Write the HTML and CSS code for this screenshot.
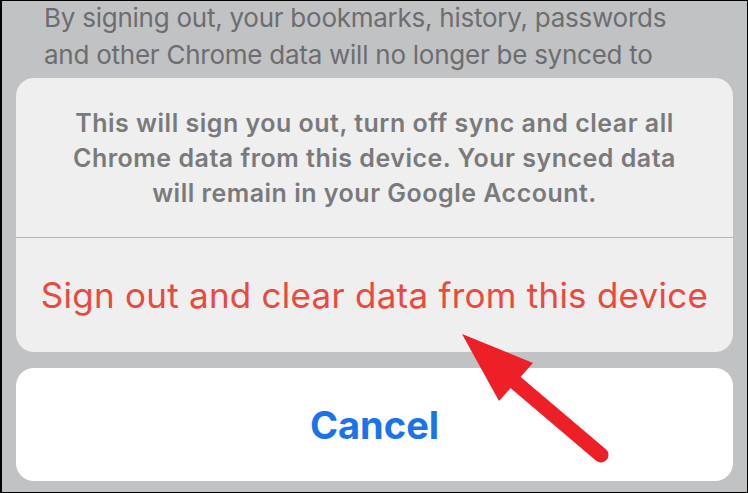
FILE: index.html
```html
<!DOCTYPE html>
<html lang="en">
<head>
<meta charset="utf-8">
<title>Sign out</title>
<link rel="stylesheet" href="styles.css">
</head>
<body>
<div class="screen">
  <div class="behind">
    <p class="behind-text">By signing out, your bookmarks, history, passwords<br>and other Chrome data will no longer be synced to</p>
  </div>
  <div class="sheet">
    <div class="card actions">
      <div class="message">This will sign you out, turn off sync and clear all<br>Chrome data from this device. Your synced data<br>will remain in your Google Account.</div>
      <div class="action destructive">Sign out and clear data from this device</div>
    </div>
    <div class="card cancel">
      <div class="action cancel-label">Cancel</div>
    </div>
  </div>
  <svg class="arrow" width="748" height="493" viewBox="0 0 748 493">
    <line x1="515" y1="382" x2="601" y2="455" stroke="#ed1f27" stroke-width="15" stroke-linecap="round"/>
    <polygon points="462,334 533,363 499,401" fill="#ed1f27"/>
  </svg>
</div>
</body>
</html>
```
FILE: styles.css
```css
* { box-sizing: border-box; }
html, body { margin: 0; padding: 0; }
body { width: 748px; height: 493px; overflow: hidden; font-family: Inter, Roboto, "Liberation Sans", sans-serif; }
.screen {
  position: relative;
  width: 748px;
  height: 493px;
  background: #c1c2c4;
  border: 1px solid #000;
  border-left-width: 2px;
  display: flex;
  flex-direction: column;
}
.behind { height: 77px; overflow: hidden; padding-left: 42px; }
.behind-text {
  margin: -2px 0 0 0;
  white-space: nowrap;
  font-size: 26px;
  letter-spacing: -0.25px;
  line-height: 37px;
  color: #6d6d70;
}
.sheet { padding: 0 14px; display: flex; flex-direction: column; gap: 16px; }
.card { border-radius: 18px; overflow: hidden; }
.actions { background: #efefef; }
.message {
  height: 160px;
  padding-top: 28px;
  text-align: center;
  white-space: nowrap;
  font-size: 25px;
  letter-spacing: 0.5px;
  font-weight: 600;
  line-height: 35px;
  color: #7a7a7c;
  border-bottom: 1px solid #b4b4b6;
}
.action { display: flex; align-items: center; justify-content: center; }
.destructive { height: 114px; font-size: 35px; letter-spacing: 0.25px; color: #ea4a3d; }
.cancel { background: #fff; height: 113px; }
.cancel-label { height: 113px; font-size: 38px; font-weight: 700; color: #1a73e8; }
.arrow { position: absolute; left: -2px; top: -1px; }
```
